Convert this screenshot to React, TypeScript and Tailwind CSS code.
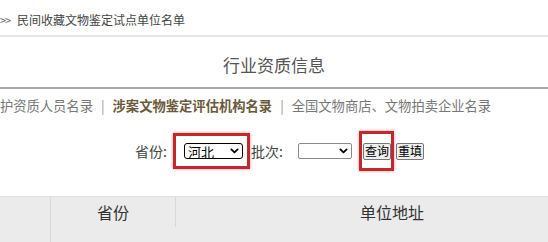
import React from "react"

// 行业资质信息 - 查询页截图复刻
const font = { fontFamily: '"Noto Sans CJK SC", "Noto Sans", sans-serif' }

function Chevron({ className }: { className?: string }) {
  return (
    <svg viewBox="0 0 10 6" className={className} fill="none" stroke="currentColor" strokeWidth={2} strokeLinecap="round" strokeLinejoin="round">
      <path d="M1.5 1.2 5 4.6 8.5 1.2" />
    </svg>
  )
}

export default function App() {
  return (
    <div className="w-[548px] h-[242px] overflow-hidden bg-white text-[#333]" style={font}>
      {/* breadcrumb */}
      <div className="h-[37px] flex items-center pt-[5px] border-b-2 border-[#e6e6e6] text-[12px] text-[#444]">
        <span className="w-[17px] text-[11px] text-[#666] tracking-[-1px]">&gt;&gt;</span>
        <span>民间收藏文物鉴定试点单位名单</span>
      </div>

      {/* title */}
      <div className="h-[52px] flex items-center justify-center border-b-2 border-[#a8a8a8] text-[17px] text-[#555] pt-[6px]">
        行业资质信息
      </div>

      {/* nav */}
      <div className="h-[34px] overflow-hidden flex items-center">
        <div className="flex items-center whitespace-nowrap text-[13.3px] text-[#777] -ml-[40px]">
          <span>文物保护资质人员名录</span>
          <span className="px-[8px] text-[#999]">|</span>
          <span className="font-bold text-[#6b5a3c]">涉案文物鉴定评估机构名录</span>
          <span className="px-[8px] text-[#999]">|</span>
          <span>全国文物商店、文物拍卖企业名录</span>
        </div>
      </div>

      {/* form */}
      <div className="h-[56px] flex items-center pl-[135px] text-[14px] text-[#444] whitespace-nowrap">
        <span className="w-[38px]">省份:</span>
        <div className="border-[3px] border-[#c3282e] h-[36px] w-[77px] flex items-center pl-[8px] shadow-[0_0_3px_rgba(195,40,46,0.5)]">
          <div className="w-[59px] h-[16px] border-[1.5px] border-black rounded-[3px] flex items-center justify-between px-[3px] text-[13px] text-black leading-none">
            <span>河北</span>
            <Chevron className="w-[9px] h-[6px]" />
          </div>
        </div>
        <span className="w-[48px] pl-[1px]">批次:</span>
        <div className="w-[54px] h-[16px] border border-[#8a8a8a] rounded-[2px] flex items-center justify-end pr-[3px] text-black">
          <Chevron className="w-[9px] h-[6px]" />
        </div>
        <div className="ml-[7px] border-[3px] border-[#c3282e] h-[40px] w-[35px] flex items-center pl-[1px] shadow-[0_0_3px_rgba(195,40,46,0.5)]">
          <div className="w-[28px] h-[17px] border border-[#777] bg-[#efefef] rounded-[2px] flex items-center justify-center text-[12px] text-black leading-none whitespace-nowrap">
            查询
          </div>
        </div>
        <div className="ml-[2px] w-[28px] h-[17px] border border-[#777] bg-[#efefef] rounded-[2px] flex items-center justify-center text-[12px] text-black leading-none whitespace-nowrap">
          重填
        </div>
      </div>

      {/* table header */}
      <div className="mt-[17px] grid grid-cols-[51px_125px_432px] h-[60px] bg-[#ebebeb] border-t border-[#e0e0e0] text-[16px] text-[#333]">
        <div className="border-r border-[#d8d8d8]" />
        <div className="border-r border-[#d8d8d8] flex items-center justify-center h-[30px]">省份</div>
        <div className="flex items-center justify-center h-[30px]">单位地址</div>
      </div>
    </div>
  )
}
